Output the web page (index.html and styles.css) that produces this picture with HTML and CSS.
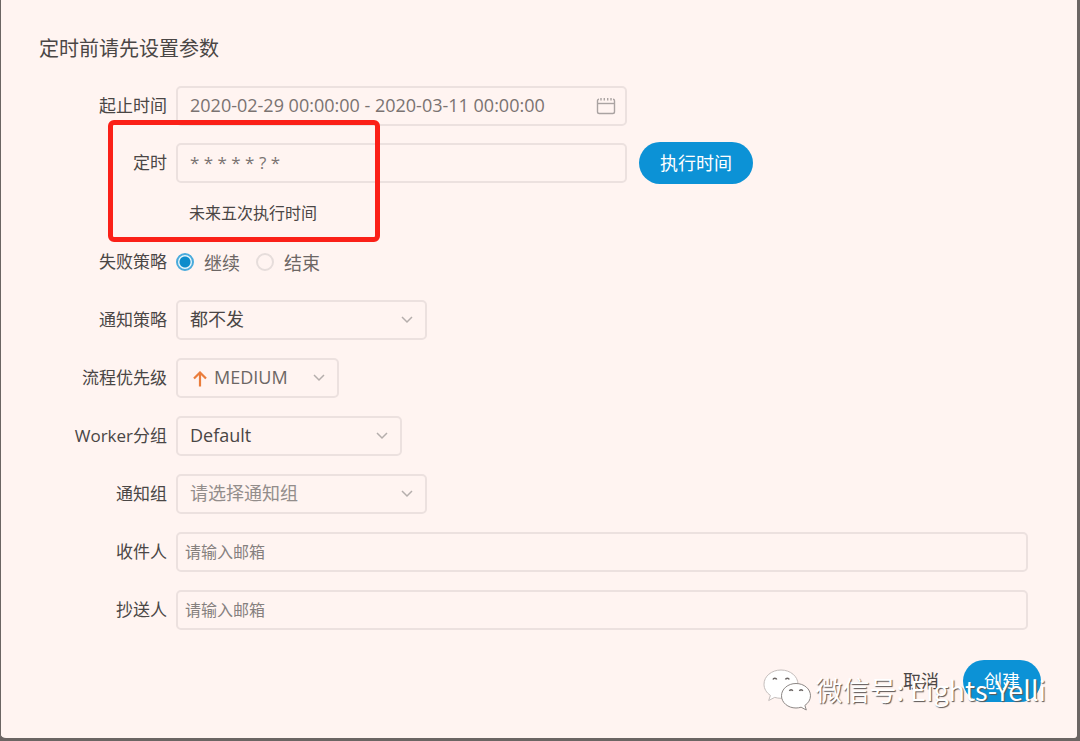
FILE: index.html
```html
<!DOCTYPE html>
<html lang="zh-CN">
<head>
    <meta charset="UTF-8">
    <meta name="viewport" content="width=device-width, initial-scale=1.0">
    <title>定时前请先设置参数</title>
    <link rel="stylesheet" href="styles.css">
</head>
<body>

    <form class="dialog" id="timingForm">
        <h1>定时前请先设置参数</h1>

        <div class="rows rows-timing">
            <div class="row">
                <label class="row-label" for="date_range">起止时间</label>
                <div class="control control-date">
                    <input type="text" id="date_range" name="date_range" value="2020-02-29 00:00:00 - 2020-03-11 00:00:00">
                    <svg class="calendar" width="20" height="18" viewBox="0 0 20 18" fill="none" stroke="#aaa3a2" stroke-width="1.4">
                        <path d="M3 2.200c-1 0-1.500.6-1.500 1.500v11c0 1.200.6 1.800 1.800 1.800h13.400c1.200 0 1.800-.6 1.800-1.800v-11c0-.9-.5-1.500-1.500-1.500"/>
                        <path d="M1.500 6.500h17"/>
                        <path d="M5 1v2.400M8.300 1v2.400M11.700 1v2.400M15 1v2.400"/>
                    </svg>
                </div>
            </div>

            <div class="row">
                <label class="row-label" for="crontab">定时</label>
                <div class="control control-date">
                    <input class="cron" type="text" id="crontab" name="crontab" value="* * * * * ? *">
                </div>
                <button type="button" class="btn">执行时间</button>
            </div>

            <p class="hint">未来五次执行时间</p>

            <!-- Marks the cron expression area -->
            <div class="highlight"></div>
        </div>

        <div class="rows">
            <div class="row" role="radiogroup" aria-labelledby="failure_label">
                <span class="row-label" id="failure_label">失败策略</span>
                <div class="radios">
                    <label><input type="radio" name="failure" value="continue" checked>继续</label>
                    <label><input type="radio" name="failure" value="end">结束</label>
                </div>
            </div>

            <div class="row">
                <label class="row-label" for="warning_type">通知策略</label>
                <div class="control control-wide">
                    <select id="warning_type" name="warning_type">
                        <option>都不发</option>
                    </select>
                    <svg class="chevron" width="12" height="8" viewBox="0 0 12 8"><path d="M1 1l5 5 5-5"/></svg>
                </div>
            </div>

            <div class="row">
                <label class="row-label" for="priority">流程优先级</label>
                <div class="control control-priority">
                    <svg class="arrow" width="14" height="16" viewBox="0 0 14 16"><path d="M7 15.500V2M1 7.500l6-6 6 6"/></svg>
                    <select id="priority" name="priority">
                        <option>MEDIUM</option>
                    </select>
                    <svg class="chevron" width="12" height="8" viewBox="0 0 12 8"><path d="M1 1l5 5 5-5"/></svg>
                </div>
            </div>

            <div class="row">
                <label class="row-label" for="worker">Worker分组</label>
                <div class="control control-worker">
                    <select id="worker" name="worker">
                        <option>Default</option>
                    </select>
                    <svg class="chevron" width="12" height="8" viewBox="0 0 12 8"><path d="M1 1l5 5 5-5"/></svg>
                </div>
            </div>

            <div class="row">
                <label class="row-label" for="group">通知组</label>
                <div class="control control-wide">
                    <select class="empty" id="group" name="group">
                        <option>请选择通知组</option>
                    </select>
                    <svg class="chevron" width="12" height="8" viewBox="0 0 12 8"><path d="M1 1l5 5 5-5"/></svg>
                </div>
            </div>

            <div class="row">
                <label class="row-label" for="receivers">收件人</label>
                <div class="control control-mail">
                    <input type="text" id="receivers" name="receivers" placeholder="请输入邮箱">
                </div>
            </div>

            <div class="row">
                <label class="row-label" for="receivers_cc">抄送人</label>
                <div class="control control-mail">
                    <input type="text" id="receivers_cc" name="receivers_cc" placeholder="请输入邮箱">
                </div>
            </div>
        </div>

        <div class="actions">
            <button type="button" class="btn-text">取消</button>
            <button type="submit" class="btn">创建</button>
        </div>

        <div class="watermark">
            <svg width="48" height="42" viewBox="0 0 48 42" fill="#fff" stroke="#8d8785" stroke-width="1">
                <path d="M18 1C8.500 1 1 7.300 1 15.200c0 4.600 2.500 8.500 6.400 11.200L5.700 31.500l6-3.100c2 .6 4.100.9 6.300.9 9.400 0 17-6.300 17-14.100S27.400 1 18 1z" stroke="#c4bdbb"/>
                <path d="M33 14.500c-8.100 0-14.500 5.500-14.500 12.300S24.900 39 33 39c1.800 0 3.500-.3 5.100-.8l5.200 2.800-1.400-4.600c3.400-2.300 5.600-5.700 5.600-9.600 0-6.800-6.400-12.300-14.500-12.300z"/>
                <g fill="none" stroke="#6b6563" stroke-width="1.500">
                    <path d="M10 10.500c.5-1.800 3.200-1.800 3.700 0M22.500 10.500c.5-1.800 3.200-1.800 3.700 0"/>
                    <path d="M26.500 22c.4-1.600 2.800-1.600 3.200 0M36.500 22c.4-1.600 2.800-1.600 3.200 0"/>
                </g>
            </svg>
            <span>微信号: Eights-Yelli</span>
        </div>
    </form>

</body>
</html>
```
FILE: styles.css
```css
* {
  box-sizing: border-box;
}

body {
  margin: 0;
  font-family: "Open Sans", "Noto Sans CJK SC", sans-serif;
  font-size: 18px;
  color: #4a4645;
  background: #6b6563;
}

input,
select,
button {
  font: inherit;
}

.dialog {
  position: relative;
  min-height: 100vh;
  padding: 34px 36px 36px 38px;
  border: solid #6b6563;
  border-width: 0 3px 3px 1px;
  border-radius: 0 0 6px 6px;
  background: #fff4f1;
}

h1 {
  margin: 0 0 22px;
  font-size: 20px;
  font-weight: normal;
  line-height: 30px;
}

.rows {
  display: flex;
  flex-direction: column;
  gap: 18px;
  padding-right: 13px;
}

.rows-timing {
  position: relative;
  gap: 17px;
  margin-bottom: 16px;
}

.row {
  display: flex;
  align-items: center;
  height: 40px;
}

.row-label {
  width: 128px;
  margin-right: 9px;
  padding-bottom: 3px;
  flex-shrink: 0;
  font-size: 17px;
  text-align: right;
}

.control {
  position: relative;
  height: 40px;
}

.control-date {
  width: 451px;
}

.control-wide {
  width: 251px;
}

.control-priority {
  width: 163px;
}

.control-worker {
  width: 226px;
}

.control-mail {
  flex: 1;
}

.control input,
.control select {
  width: 100%;
  height: 100%;
  padding: 0 12px 2px;
  border: 2px solid #ece1df;
  border-radius: 5px;
  background: transparent;
  color: #4a4645;
  appearance: none;
  outline: none;
}

.control-date input {
  color: #7a7371;
}

.control-date .cron {
  font-size: 17px;
}

.control-mail input {
  padding: 0 7px;
  font-size: 16px;
}

.control input::placeholder {
  color: #85807e;
  opacity: 1;
}

.control select.empty {
  color: #938d8b;
}

.control-priority select {
  padding-left: 36px;
  color: #6c6664;
}

.calendar {
  position: absolute;
  top: 11px;
  right: 11px;
}

.chevron {
  position: absolute;
  top: 16px;
  right: 14px;
  fill: none;
  stroke: #b5aeac;
  stroke-width: 1.5;
  pointer-events: none;
}

.arrow {
  position: absolute;
  top: 13px;
  left: 17px;
  fill: none;
  stroke: #ea7d3c;
  stroke-width: 2.2;
}

.btn {
  height: 42px;
  padding: 0 21px 2px;
  border: none;
  border-radius: 21px;
  background: #0c92d6;
  color: #fff;
  cursor: pointer;
}

.row .btn {
  margin-left: 12px;
}

.btn-text {
  padding: 0 0 2px;
  border: none;
  background: none;
  color: #4a4645;
  cursor: pointer;
}

.hint {
  margin: 0 0 0 150px;
  font-size: 16px;
  line-height: 26px;
}

.highlight {
  position: absolute;
  top: 34px;
  left: 69px;
  width: 272px;
  height: 122px;
  border: 5px solid #fb2018;
  border-radius: 6px;
  pointer-events: none;
}

.radios {
  display: flex;
  gap: 16px;
  color: #6c6664;
}

.radios label {
  display: flex;
  align-items: center;
  gap: 10px;
}

.radios input {
  width: 18px;
  height: 18px;
  margin: 0;
  border: 2px solid #e6dddb;
  border-radius: 50%;
  appearance: none;
}

.radios input:checked {
  border-color: #4aabdc;
  background: radial-gradient(circle, #0c8ccb 5px, #e4f4fa 6px);
}

.actions {
  display: flex;
  justify-content: flex-end;
  align-items: center;
  gap: 24px;
  margin-top: 30px;
}

.watermark {
  position: absolute;
  right: 31px;
  bottom: 27px;
  display: flex;
  align-items: center;
  gap: 5px;
  font-family: "Noto Sans CJK SC", sans-serif;
  font-size: 27px;
  line-height: 42px;
  white-space: nowrap;
  color: #fff;
  text-shadow: 1px 1px 1px #5c5654;
  pointer-events: none;
}
```
